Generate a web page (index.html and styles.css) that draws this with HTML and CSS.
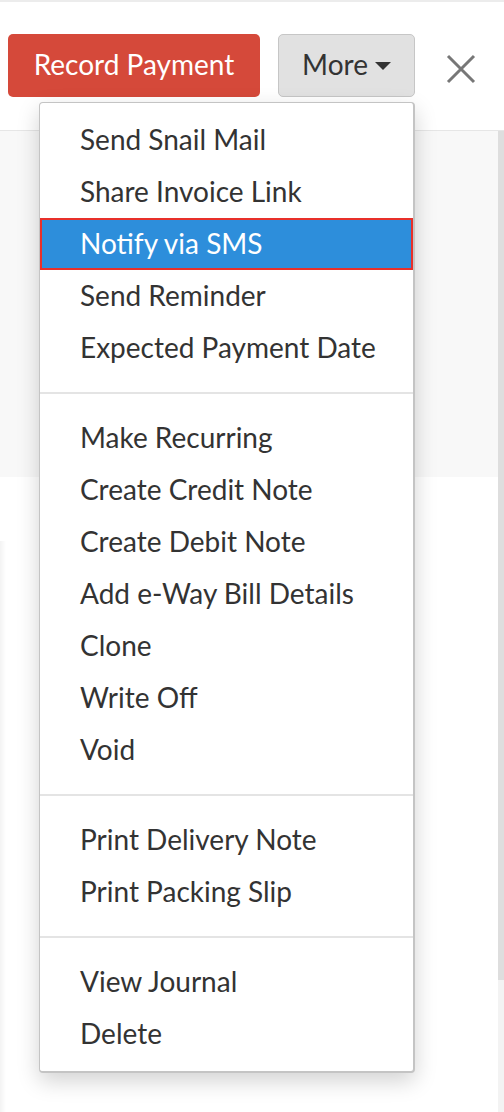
FILE: index.html
```html
<!DOCTYPE html>
<html>
<head>
<meta charset="utf-8">
<link rel="stylesheet" href="styles.css">
</head>
<body>
<div class="topbar"></div>
<header class="header">
  <button class="btn btn-primary">Record Payment</button>
  <div class="more-wrap">
    <button class="btn btn-more">More <span class="caret"></span></button>
    <ul class="dropdown">
      <li class="item">Send Snail Mail</li>
      <li class="item">Share Invoice Link</li>
      <li class="item active">Notify via SMS</li>
      <li class="item">Send Reminder</li>
      <li class="item">Expected Payment Date</li>
      <li class="divider"></li>
      <li class="item">Make Recurring</li>
      <li class="item">Create Credit Note</li>
      <li class="item">Create Debit Note</li>
      <li class="item">Add e-Way Bill Details</li>
      <li class="item">Clone</li>
      <li class="item">Write Off</li>
      <li class="item">Void</li>
      <li class="divider"></li>
      <li class="item">Print Delivery Note</li>
      <li class="item">Print Packing Slip</li>
      <li class="divider"></li>
      <li class="item">View Journal</li>
      <li class="item">Delete</li>
    </ul>
  </div>
  <button class="close" aria-label="Close">
    <svg width="30" height="30" viewBox="0 0 30 30"><path d="M2 2 L28 28 M28 2 L2 28" stroke="#777" stroke-width="3" fill="none"/></svg>
  </button>
</header>
<div class="main">
  <div class="content">
    <div class="panel"></div>
    <div class="body-area"><div class="card"></div></div>
  </div>
  <div class="scrollbar"><div class="thumb"></div></div>
</div>
</body>
</html>
```

FILE: styles.css
```css
* { box-sizing: border-box; }
html, body { margin: 0; padding: 0; }
body {
  background: #fff;
  font-family: "Lato", "Liberation Sans", sans-serif;
  color: #333;
  height: 1112px;
  overflow: hidden;
}
.topbar { height: 2px; background: #ececec; }
.header {
  height: 129px;
  display: flex;
  align-items: flex-start;
  padding: 32px 0 0 8px;
  border-bottom: 1px solid #e6e6e6;
  background: #fff;
}
.btn {
  font-family: inherit;
  height: 63px;
  border-radius: 5px;
  font-size: 28px;
  cursor: pointer;
  padding: 0 0 3px 0;
}
.btn-primary {
  width: 252px;
  background: #d5493a;
  color: #fff;
  border: none;
}
.more-wrap {
  position: relative;
  margin-left: 18px;
}
.btn-more {
  width: 137px;
  background: #e1e1e1;
  border: 1px solid #c6c6c6;
  color: #333;
  display: flex;
  align-items: center;
  justify-content: center;
  gap: 7px;
}
.caret {
  width: 0; height: 0;
  border-left: 8px solid transparent;
  border-right: 8px solid transparent;
  border-top: 8px solid #333;
  margin-top: 4px;
}
.close {
  margin: 20px 0 0 31px;
  padding: 0;
  border: none;
  background: none;
  width: 30px;
  height: 30px;
}
.dropdown {
  position: absolute;
  top: 68px;
  right: 0;
  width: 376px;
  margin: 0;
  padding: 11px 0;
  list-style: none;
  background: #fff;
  border: 1px solid #c4c4c4;
  border-right-width: 2px;
  border-bottom-width: 2px;
  border-radius: 4px;
  box-shadow: 0 8px 22px rgba(0,0,0,0.18);
  z-index: 10;
}
.item {
  height: 52px;
  line-height: 50px;
  padding-left: 40px;
  font-size: 28px;
  color: #333;
  white-space: nowrap;
}
.item.active {
  background: #2d8edb;
  color: #fff;
  border: 2px solid #e8302a;
  line-height: 46px;
  padding-left: 38px;
}
.divider {
  height: 2px;
  background: #e4e4e4;
  margin: 18px 0;
}
.main {
  display: flex;
  height: 981px;
}
.content { flex: 1; display: flex; flex-direction: column; }
.panel { height: 346px; background: #f8f8f8; }
.body-area { flex: 1; padding: 64px 0 0 0; }
.card { height: 100%; width: 6px; background: linear-gradient(to right, #f3f3f3, #fff); }
.scrollbar { width: 6px; background: #f3f3f3; }
.thumb { height: 849px; background: #dedede; }
```
